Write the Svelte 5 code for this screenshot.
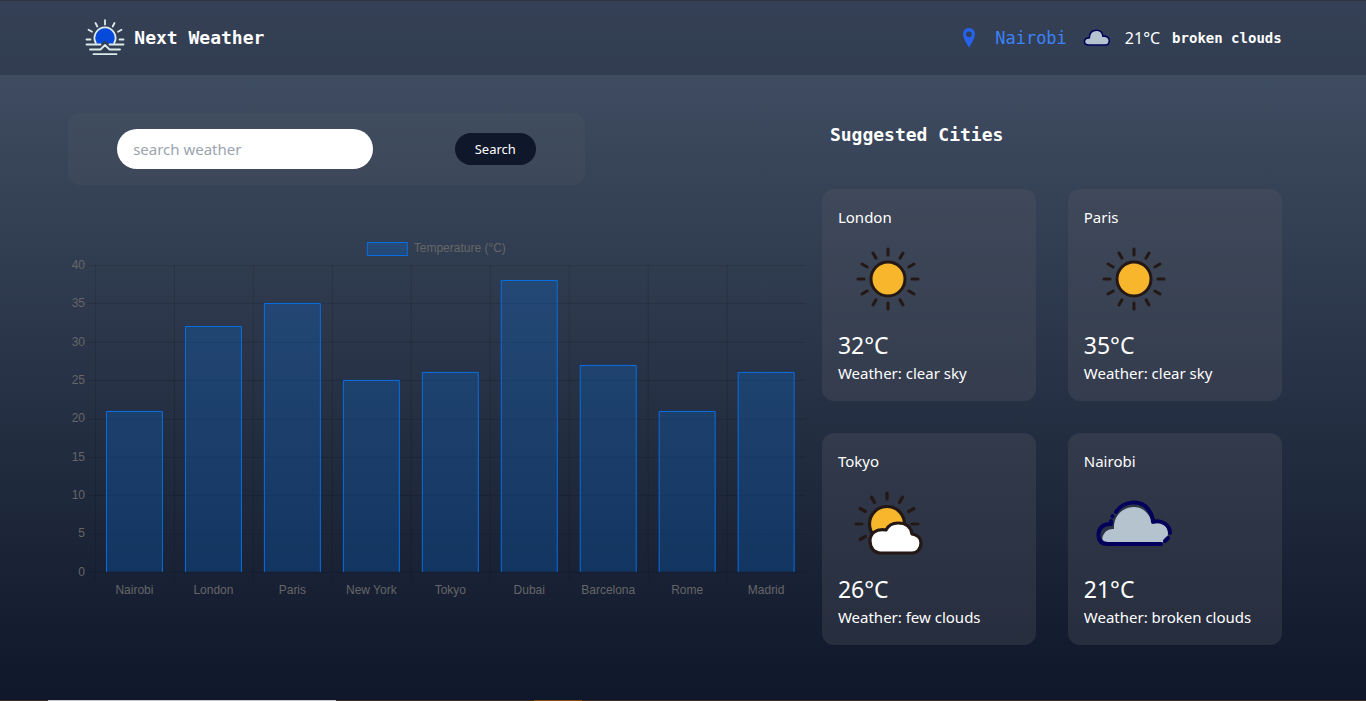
<script>
  const readings = [
    { city: 'Nairobi', temp: 21 },
    { city: 'London', temp: 32 },
    { city: 'Paris', temp: 35 },
    { city: 'New York', temp: 25 },
    { city: 'Tokyo', temp: 26 },
    { city: 'Dubai', temp: 38 },
    { city: 'Barcelona', temp: 27 },
    { city: 'Rome', temp: 21 },
    { city: 'Madrid', temp: 26 }
  ];
  const suggested = [
    { city: 'London', temp: 32, sky: 'clear sky', icon: 'sun' },
    { city: 'Paris', temp: 35, sky: 'clear sky', icon: 'sun' },
    { city: 'Tokyo', temp: 26, sky: 'few clouds', icon: 'partly' },
    { city: 'Nairobi', temp: 21, sky: 'broken clouds', icon: 'cloud' }
  ];

  // Chart geometry, in viewBox units
  const plot = { left: 27, right: 738, top: 33, bottom: 340 };
  const slot = (plot.right - plot.left) / readings.length;
  const barWidth = slot * 0.72;
  const ticks = [0, 5, 10, 15, 20, 25, 30, 35, 40];
  const y = (value) => plot.bottom - (value / 40) * (plot.bottom - plot.top);
  const crisp = (value) => Math.round(value) + 0.5;
  const barPath = (i, temp) => {
    const x1 = crisp(plot.left + slot * (i + 0.5) - barWidth / 2);
    const x2 = crisp(plot.left + slot * (i + 0.5) + barWidth / 2 - 0.5);
    return `M${x1} ${plot.bottom}V${crisp(y(temp))}H${x2}V${plot.bottom}`;
  };

  let query = $state('');
</script>

{#snippet weatherIcon(kind)}
  <svg class="weather-icon" viewBox="0 0 100 100" aria-hidden="true">
    {#if kind === 'sun'}
      <g stroke="#231815" stroke-width="3" stroke-linecap="round">
        {#each [0, 30, 60, 90, 120, 150, 180, 210, 240, 270, 300, 330] as angle}
          <line x1="50" y1="20" x2="50" y2="26" transform="rotate({angle} 50 50)" />
        {/each}
        <circle cx="50" cy="50" r="17" fill="#f8b62d" />
      </g>
    {:else if kind === 'partly'}
      <g stroke="#231815" stroke-width="3.200" stroke-linecap="round" stroke-linejoin="round">
        {#each [240, 270, 300, 330, 0, 30, 60, 90] as angle}
          <line x1="49" y1="20" x2="49" y2="26" transform="rotate({angle} 49 51)" />
        {/each}
        <circle cx="49" cy="51" r="17.500" fill="#f8b62d" />
        <path fill="#fff" d="M43 80C36 80 32 75 32 68C32 60 38 55.500 48 57C51 51 56 50 60 50C68 50 73 54 74 61C80 62 83 66 83 70C83 76 79 80 74 80Z" />
      </g>
    {:else}
      <path fill="#b5c3cf" d="M24 70C18 70 17 65 20 61C22 57 26 56 30 56C29 44 38 34 50 34C59 34 66 41 68 50C76 47 84 52 84 60C84 65 80 70 76 70Z" />
      <g fill="none" stroke="#02005b" stroke-width="4" stroke-linecap="round" stroke-linejoin="round">
        <path d="M32 39C39 28 56 26 64 36C67 40 69 44 69 49C77 46 86 52 86 60" />
        <path d="M28.500 43V43.500" />
        <path d="M27 48V51C19 50 14 56 14.500 63C15 69 19 71 24 71H77" />
        <path d="M81 68L84 65" />
      </g>
    {/if}
  </svg>
{/snippet}

<div class="page">
  <header>
    <nav class="container">
      <a class="brand" href="/">
        <svg viewBox="0 0 42 42" aria-hidden="true">
          <g fill="none" stroke="#dcebea" stroke-width="1.800" stroke-linecap="round">
            <path fill="#054ada" stroke="none" d="M12 26.500A10.500 10.500 0 1 1 30 26.500L25 27L21 23.500L17 27Z" />
            <path d="M11.800 26A10.500 10.500 0 1 1 30.200 26" />
            <path d="M21 3.200V7.500M11.500 6L13.300 9.500M30.500 6L28.700 9.500M4.500 12.700L8 14.800M37.500 12.700L34 14.800M2.500 22.500H6.500M35.500 22.500H39.500" />
            <path stroke-linejoin="round" d="M2.500 27.500H16.500M25.500 27.500H39.500M6 32.500H16.500L21 28L25.500 32.500H36M9.500 37.200H32.500" />
          </g>
        </svg>
        <span>Next Weather</span>
      </a>
      <div class="current">
        <svg class="pin" viewBox="0 0 14 20" aria-hidden="true">
          <path fill="#2563eb" fill-rule="evenodd" d="M7 0C3.300 0 1 2.800 1 6.200C1 10.500 7 19.500 7 19.500S13 10.500 13 6.200C13 2.800 10.700 0 7 0ZM7 3.500A2.800 2.800 0 1 1 7 9.100A2.800 2.800 0 1 1 7 3.500Z" />
        </svg>
        <span class="place">Nairobi</span>
        <svg class="mini-cloud" viewBox="0 0 28 18" aria-hidden="true">
          <path fill="#b5c3cf" stroke="#02005b" stroke-width="1.600" stroke-linejoin="round" d="M6 16C2.500 16 1 14 1.500 11.800C2 9.500 4 8.800 6.300 9C6.500 4 9.500 1.300 13.500 1.300C17.200 1.300 19.500 4 20 7.300C23.500 6.600 26.300 8.800 26.300 11.800C26.300 14.300 24.500 16 22.500 16Z" />
        </svg>
        <span class="now">21°C</span>
        <span class="sky">broken clouds</span>
      </div>
    </nav>
  </header>

  <main class="container">
    <section class="overview">
      <form class="search" onsubmit={(event) => event.preventDefault()}>
        <input type="text" aria-label="search weather" placeholder="search weather" bind:value={query} />
        <button type="submit">Search</button>
      </form>

      <svg class="chart" viewBox="0 0 738 369" role="img" aria-label="Temperature (°C)">
        <rect class="bar" x="299.500" y="10.500" width="40" height="13" />
        <text x="346" y="20">Temperature (°C)</text>

        {#each ticks as tick}
          <line class="grid" x1={plot.left - 8} x2={plot.right} y1={crisp(y(tick))} y2={crisp(y(tick))} />
          <text x={plot.left - 10} y={y(tick) + 4} text-anchor="end">{tick}</text>
        {/each}
        {#each readings as reading, i}
          <line class="grid" x1={crisp(plot.left + slot * i)} x2={crisp(plot.left + slot * i)} y1={plot.top} y2={plot.bottom + 8} />
          <text x={plot.left + slot * (i + 0.5)} y="362" text-anchor="middle">{reading.city}</text>
        {/each}
        {#each readings as reading, i}
          <path class="bar" d={barPath(i, reading.temp)} />
        {/each}
      </svg>
    </section>

    <section class="cities">
      <h2>Suggested Cities</h2>
      <div class="cards">
        {#each suggested as item}
          <article>
            <h3>{item.city}</h3>
            {@render weatherIcon(item.icon)}
            <p class="temp">{item.temp}°C</p>
            <p>Weather: {item.sky}</p>
          </article>
        {/each}
      </div>
    </section>
  </main>

  <footer></footer>
</div>

<style>
  :global(body) {
    margin: 0;
    background: #0f172a;
  }
  .page {
    box-sizing: border-box;
    min-height: 100vh;
    display: flex;
    flex-direction: column;
    border-top: 1px solid #34343f;
    background: linear-gradient(#445267, #0f172a);
    color: #fff;
    font: 15px/24px "Segoe UI", "Noto Sans", sans-serif;
  }
  .container {
    box-sizing: border-box;
    width: 90%;
    margin: 0 auto;
  }
  header {
    background: rgba(20, 25, 48, 0.3);
  }
  nav {
    display: flex;
    align-items: center;
    justify-content: space-between;
    padding: 16px;
  }
  .brand {
    display: flex;
    align-items: center;
    gap: 8px;
    color: inherit;
    text-decoration: none;
    font: bold 18px/28px Consolas, "DejaVu Sans Mono", monospace;
  }
  .brand svg {
    width: 42px;
    height: 42px;
  }
  .current {
    display: flex;
    align-items: center;
    font-family: Consolas, "DejaVu Sans Mono", monospace;
  }
  .pin {
    width: 14px;
    height: 20px;
    margin-right: 19px;
  }
  .place {
    margin-right: 16px;
    color: #3b82f6;
    font-size: 17px;
  }
  .mini-cloud {
    width: 28px;
    height: 18px;
    margin-right: 14px;
  }
  .now {
    margin-right: 12px;
    font-family: "Segoe UI", "Noto Sans", sans-serif;
    font-size: 16px;
  }
  .sky {
    font-size: 14px;
    font-weight: bold;
  }
  main {
    flex: 1;
    display: grid;
    grid-template-columns: 3fr 2fr;
    padding-top: 38px;
  }
  .search {
    box-sizing: border-box;
    width: 70%;
    display: flex;
    align-items: center;
    justify-content: space-around;
    padding: 16px 8px;
    border-radius: 12px;
    background: rgba(75, 85, 99, 0.3);
  }
  input {
    box-sizing: border-box;
    width: 256px;
    height: 40px;
    padding: 0 16px;
    border: 0;
    border-radius: 20px;
    background: #fff;
    color: #111827;
    font: inherit;
  }
  input::placeholder {
    color: #9ca3af;
    opacity: 1;
  }
  button {
    width: 81px;
    height: 32px;
    padding: 0;
    border: 0;
    border-radius: 16px;
    background: #0f172a;
    color: #fff;
    font: 13px/20px "Segoe UI", "Noto Sans", sans-serif;
  }
  .chart {
    display: block;
    width: 100%;
    margin-top: 47px;
  }
  .chart text {
    fill: #666;
    font: 12px Helvetica, "Liberation Sans", sans-serif;
  }
  .grid {
    stroke: rgba(0, 0, 0, 0.12);
  }
  .bar {
    fill: rgba(0, 123, 255, 0.22);
    stroke: #056fe4;
  }
  .cities {
    padding: 0 16px 55px;
  }
  h2 {
    margin: 8px 8px 40px;
    font: bold 18px/28px Consolas, "DejaVu Sans Mono", monospace;
  }
  .cards {
    display: grid;
    grid-template-columns: 1fr 1fr;
    gap: 32px;
  }
  article {
    padding: 16px;
    border-radius: 12px;
    background: rgba(85, 89, 99, 0.3);
  }
  h3,
  p {
    margin: 0;
    font-size: 15px;
    font-weight: 400;
  }
  .weather-icon {
    display: block;
    width: 100px;
    height: 100px;
  }
  p.temp {
    font-size: 23px;
    line-height: 32px;
  }
  footer {
    height: 1px;
    background: linear-gradient(90deg, #3a2a17 48px, #c9c9c9 48px 336px, #3a2a17 336px 534px, #8a4f14 534px 582px, #3a2a17 582px);
  }
</style>
